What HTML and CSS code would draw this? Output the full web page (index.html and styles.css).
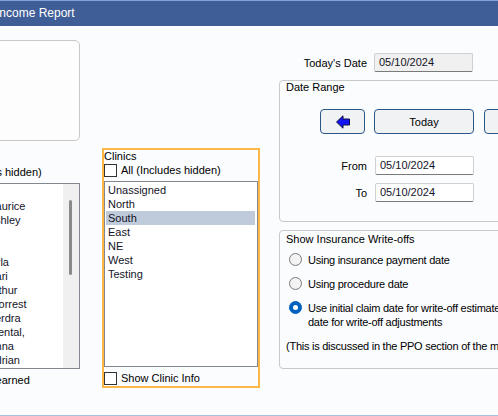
FILE: index.html
```html
<!DOCTYPE html>
<html lang="en-US">
<head>
<meta charset="utf-8">
<title>Income Report</title>
<link rel="stylesheet" href="styles.css">
</head>
<body>
<div class="window">
  <div class="titlebar"><span class="title">Income Report</span></div>

  <div class="content">
    <!-- providers column, mostly scrolled off the left edge -->
    <div class="col-left">
      <div class="panel"></div>
      <div class="check"><span class="box"></span>All (Includes hidden)</div>
      <div class="listbox provlist">
        <ul class="items">
          <li>Li, Jo</li>
          <li>Lo, Maurice</li>
          <li>Ng, Ashley</li>
          <li>Li, Al</li>
          <li>Li, Bo</li>
          <li>Li, Carla</li>
          <li>Ng, Kari</li>
          <li>Ng, Arthur</li>
          <li>Lim, Forrest</li>
          <li>Ko, Kerdra</li>
          <li>Ace Dental,</li>
          <li>Lin, Anna</li>
          <li>Lin, Adrian</li>
        </ul>
        <div class="scrollbar"><div class="thumb"></div></div>
      </div>
      <div class="check note"><span class="box"></span>Include Unearned</div>
    </div>

    <div class="clinics">
      <div class="caption">Clinics</div>
      <div class="check"><span class="box"></span>All (Includes hidden)</div>
      <div class="listbox">
        <ul class="items">
          <li>Unassigned</li>
          <li>North</li>
          <li class="selected">South</li>
          <li>East</li>
          <li>NE</li>
          <li>West</li>
          <li>Testing</li>
        </ul>
      </div>
      <div class="check bottom"><span class="box"></span>Show Clinic Info</div>
    </div>

    <div class="col-right">
      <div class="field-row today">
        <span class="lbl">Today's Date</span>
        <span class="field readonly">05/10/2024</span>
      </div>

      <div class="group range">
        <div class="caption">Date Range</div>
        <div class="buttons">
          <button class="btn btn-arrow" type="button">
            <svg width="14" height="14" viewBox="0 0 14 14">
              <polygon points="0.5,7 7,0.8 7,4 13.5,4 13.5,10 7,10 7,13.2" fill="#1414f2" stroke="#101040" stroke-width="1"/>
            </svg>
          </button>
          <button class="btn btn-today" type="button">Today</button>
          <button class="btn btn-next" type="button"></button>
        </div>
        <div class="field-row from">
          <span class="lbl">From</span>
          <span class="field">05/10/2024</span>
        </div>
        <div class="field-row to">
          <span class="lbl">To</span>
          <span class="field">05/10/2024</span>
        </div>
      </div>

      <div class="group writeoffs">
        <div class="caption">Show Insurance Write-offs</div>
        <div class="radio"><span class="dot"></span><span>Using insurance payment date</span></div>
        <div class="radio"><span class="dot"></span><span>Using procedure date</span></div>
        <div class="radio checked"><span class="dot"></span><span>Use initial claim date for write-off estimates and payment<br>date for write-off adjustments</span></div>
        <p class="hint">(This is discussed in the PPO section of the manual.)</p>
      </div>
    </div>
  </div>
</div>
</body>
</html>
```

FILE: styles.css
```css
* { box-sizing: border-box; }
body {
	margin: 0;
	background: #fbfcfe;
	font: 11px/14px "Liberation Sans", Arial, sans-serif;
	color: #000;
}
.window {
	width: 498px;
	height: 416px;
	overflow: hidden;
	border-bottom: 1px solid #a6bde3;
	background: #fbfcfe;
}
.titlebar {
	height: 26px;
	background: #3f5e98;
	border-top: 1px solid #7fa3df;
	color: #fff;
	font-size: 12px;
	line-height: 24px;
	white-space: nowrap;
}
.title { display: block; text-indent: -4px; }

.content {
	display: flex;
	align-items: flex-start;
	white-space: nowrap;
}

/* checkboxes */
.check {
	display: flex;
	align-items: center;
	height: 14px;
}
.box {
	width: 13px; height: 13px;
	border: 1px solid #333;
	background: #fff;
	margin-right: 4px;
	flex: none;
}

/* list boxes */
.listbox {
	display: flex;
	border: 1px solid #828790;
	background: #fff;
	padding: 1px;
	overflow: hidden;
}
.items {
	flex: 1;
	list-style: none;
	margin: 0;
	padding: 0;
	color: #141428;
	overflow: hidden;
}
.items li { padding-left: 2px; height: 14px; line-height: 14px; }
.items li.selected { background: #bfcadb; }

/* left (providers) column */
.col-left {
	flex: none;
	width: 155px;
	margin-left: -75px;
	padding-top: 14px;
}
.panel {
	height: 101px;
	border: 1px solid #c9c9c9;
	border-radius: 5px;
	background: #fdfdfe;
}
.col-left .check { margin-top: 24px; margin-left: 0; }
.provlist {
	margin-top: 4px;
	margin-left: 37px;
	height: 186px;
	padding: 0 0 0 1px;
}
.provlist .items { padding-top: 1px; padding-left: 2px; }
.scrollbar {
	width: 16px;
	flex: none;
	background: #f0f0f0;
	padding: 16px 0 0 6px;
}
.thumb {
	width: 3px;
	height: 75px;
	background: #8a8a8a;
	border-radius: 2px;
}
.col-left .note { margin-top: 4px; margin-left: 1px; }

/* clinics */
.clinics {
	flex: none;
	width: 158px;
	margin-left: 22px;
	margin-top: 122px;
	border: 2px solid #fbb846;
	padding: 0;
}
.clinics .caption { line-height: 12px; margin-top: 0; }
.clinics .check { margin-top: 1px; }
.clinics .listbox { margin-top: 4px; height: 186px; }
.clinics .items li { margin-right: 1px; }
.clinics .bottom { margin-top: 4px; margin-bottom: 1px; }

/* right column */
.col-right {
	flex: none;
	width: 270px;
	margin-left: 19px;
	padding-top: 27px;
}
.field-row { display: flex; align-items: center; }
.lbl { width: 88px; text-align: right; margin-right: 7px; }
.field {
	width: 99px;
	height: 19px;
	line-height: 17px;
	padding-left: 4px;
	background: #fff;
	border: 1px solid #d0d0d0;
	border-bottom-color: #7a7a7a;
	border-radius: 2px;
	color: #141428;
}
.field.readonly { background: #f0f0f0; }

.group {
	border: 1px solid #c9c9c9;
	border-radius: 4px;
	background: #fbfcfe;
}
.group .caption { padding-left: 6px; line-height: 13px; }
.range { margin-top: 8px; height: 142px; }
.range .field-row .lbl { width: 87px; margin-right: 8px; }
.buttons { display: flex; margin-top: 15px; margin-left: 40px; }
.btn {
	height: 25px;
	border: 1px solid #2b5688;
	border-radius: 4px;
	background: #f1f2f4;
	font: inherit;
	color: #000;
	padding: 0;
	display: flex;
	align-items: center;
	justify-content: center;
}
.btn-arrow { width: 45px; }
.btn-today { width: 100px; margin-left: 9px; }
.btn-next { width: 45px; margin-left: 10px; }
.range .from { margin-top: 22px; }
.range .to { margin-top: 8px; }

.writeoffs { margin-top: 8px; height: 139px; }
.writeoffs .caption { padding-top: 1px; line-height: 14px; }
.radio {
	display: flex;
	align-items: flex-start;
	margin-top: 10px;
	margin-left: 9px;
	line-height: 14px;
	letter-spacing: -0.25px;
}
.writeoffs .caption + .radio { margin-top: 7px; }
.dot {
	width: 13px; height: 13px;
	border: 1px solid #7a7a7a;
	border-radius: 50%;
	background: #f3f3f3;
	margin-right: 6px;
	flex: none;
}
.radio.checked .dot {
	background: #0062bf;
	border-color: #0062bf;
	position: relative;
}
.radio.checked .dot::after {
	content: "";
	position: absolute;
	left: 3px; top: 3px;
	width: 5px; height: 5px;
	border-radius: 50%;
	background: #fff;
}
.hint { margin: 10px 0 0 6px; letter-spacing: -0.25px; }
```
